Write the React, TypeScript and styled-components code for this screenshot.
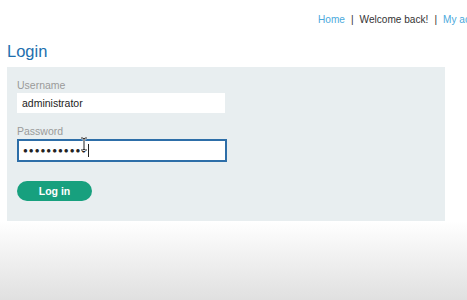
import React from 'react';
import styled, { createGlobalStyle } from 'styled-components';

const Global = createGlobalStyle`
  html, body {
    margin: 0;
    padding: 0;
    background: #fff;
    font-family: "Liberation Sans", Arial, sans-serif;
  }
`;

export default function App() {
  return (
    <Page>
      <Global />
      <TopNav>
        <NavLink>Home</NavLink>
        <Sep>|</Sep>
        <span>Welcome back!</span>
        <Sep>|</Sep>
        <NavLink>My account</NavLink>
      </TopNav>
      <Title>Login</Title>
      <Panel>
        <Label>Username</Label>
        <Field>administrator</Field>
        <Label $gap>Password</Label>
        <Field $focused>
          <Dots>●●●●●●●●●●●</Dots>
          <Caret />
          <Pointer width="8" height="14" viewBox="0 0 8 14">
            <path d="M1 1h2.2L4 2l.8-1H7M4 2v10M1 13h2.2L4 12l.8 1H7" fill="none" stroke="#fff" strokeWidth="2.4" />
            <path d="M1 1h2.2L4 2l.8-1H7M4 2v10M1 13h2.2L4 12l.8 1H7" fill="none" stroke="#222" strokeWidth="1" />
          </Pointer>
        </Field>
        <Button>Log in</Button>
      </Panel>
      <Fade />
    </Page>
  );
}

const Page = styled.div`
  width: 467px;
  height: 300px;
  overflow: hidden;
  display: flex;
  flex-direction: column;
`;

const TopNav = styled.div`
  display: flex;
  gap: 6px;
  padding: 13px 0 0 318px;
  font-size: 10.1px;
  line-height: 14px;
  color: #333;
  white-space: nowrap;
`;

const NavLink = styled.span`
  color: #4aa9dc;
`;

const Sep = styled.span`
  color: #333;
`;

const Title = styled.h1`
  margin: 13px 0 0 7px;
  font-size: 16.5px;
  font-weight: normal;
  line-height: 22px;
  color: #1e6fae;
`;

const Panel = styled.div`
  margin: 5px 0 0 7px;
  width: 418px;
  height: 134px;
  padding: 10px;
  background: #e8eef0;
  display: flex;
  flex-direction: column;
  align-items: flex-start;
`;

const Label = styled.div<{ $gap?: boolean }>`
  margin-top: ${(p) => (p.$gap ? '11px' : '1px')};
  font-size: 10.5px;
  line-height: 14px;
  color: #9a9a9a;
`;

const Field = styled.div<{ $focused?: boolean }>`
  position: relative;
  margin-top: 1px;
  box-sizing: border-box;
  width: ${(p) => (p.$focused ? '210px' : '208px')};
  height: ${(p) => (p.$focused ? '23px' : '20px')};
  padding: ${(p) => (p.$focused ? '0 4px' : '0 5px')};
  display: flex;
  align-items: center;
  background: #fff;
  border: ${(p) => (p.$focused ? '2px solid #2d6ea8' : 'none')};
  font-size: 10.5px;
  color: #222;
`;

const Dots = styled.span`
  font-size: 8px;
  letter-spacing: 1px;
  color: #222;
`;

const Caret = styled.span`
  width: 1px;
  height: 13px;
  margin-left: 1px;
  background: #222;
`;

const Pointer = styled.svg`
  position: absolute;
  left: 61px;
  top: -4px;
`;

const Button = styled.button`
  margin-top: 19px;
  width: 75px;
  height: 20px;
  border: none;
  border-radius: 10px;
  background: #17a07e;
  color: #fff;
  font-family: "Liberation Sans", Arial, sans-serif;
  font-weight: bold;
  font-size: 10.5px;
  padding: 0;
`;

const Fade = styled.div`
  flex: 1;
  background: linear-gradient(#ffffff, #e0e0e0);
`;
